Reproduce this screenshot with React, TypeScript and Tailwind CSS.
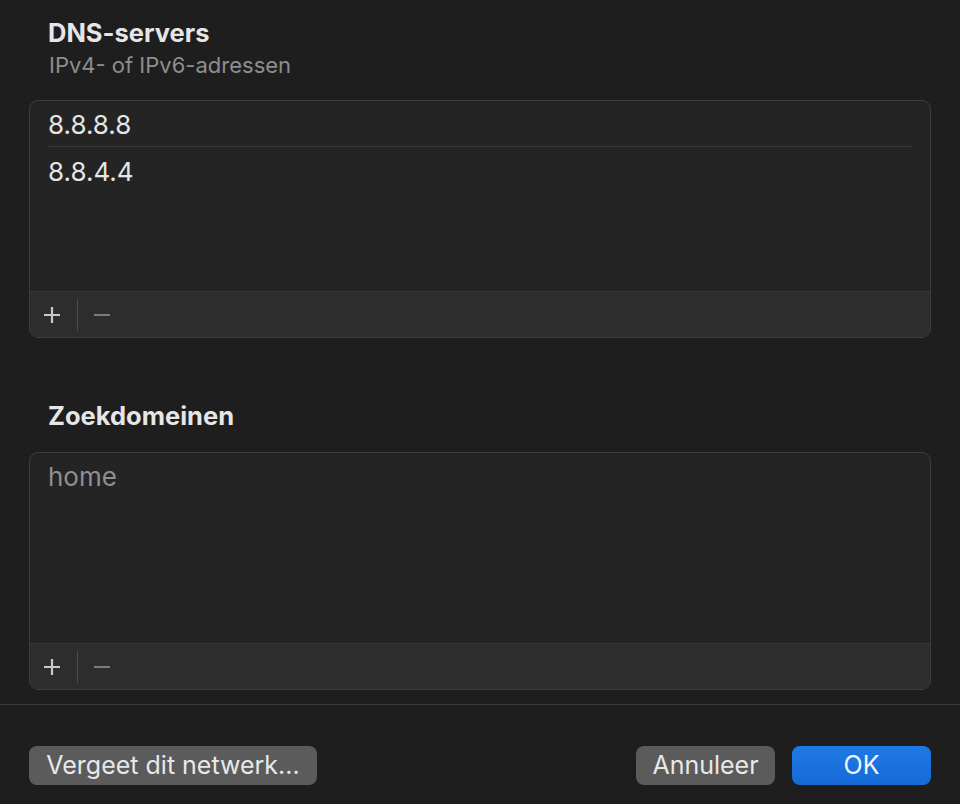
import React from "react";

const FONT = { fontFamily: "Inter, 'Noto Sans', sans-serif" };

// small +/- bar under each list
const ListFooter = () => (
  <div className="flex items-center h-[46px] bg-[#2d2d2d] border-t border-[#3a3a3a]">
    <button type="button" className="w-[47px] h-full flex items-center justify-center pr-[4px]">
      <svg width="18" height="18" viewBox="0 0 18 18">
        <path d="M9 1v16M1 9h16" stroke="#c9c9c9" strokeWidth="2.2" />
      </svg>
    </button>
    <div className="w-px h-[32px] bg-[#4a4a4a]" />
    <button type="button" className="w-[49px] h-full flex items-center justify-center pr-[1px]">
      <svg width="18" height="18" viewBox="0 0 18 18">
        <path d="M1 9h16" stroke="#7b7b7b" strokeWidth="2.2" />
      </svg>
    </button>
  </div>
);

const ListBox = ({ children }: { children: React.ReactNode }) => (
  <div className="mx-[29px] h-[238px] flex flex-col rounded-[9px] border border-[#3d3d3d] bg-[#242424] overflow-hidden">
    <div className="flex-1 flex flex-col">{children}</div>
    <ListFooter />
  </div>
);

const DNS_SERVERS = ["8.8.8.8", "8.8.4.4"];

export default function App() {
  return (
    <div className="w-[960px] h-[804px] bg-[#1e1e1e] flex flex-col text-[#e6e6e6]" style={FONT}>
      {/* DNS servers */}
      <div className="pt-[17px] px-[48px]">
        <div className="text-[25.5px] leading-[32px] font-bold">DNS-servers</div>
        <div className="text-[22px] leading-[28px] text-[#8e8e8e] mt-[2px] pl-px">IPv4- of IPv6-adressen</div>
      </div>
      <div className="mt-[21px]">
        <ListBox>
          <div className="px-[18px]">
            {DNS_SERVERS.map((ip, i) => (
              <div
                key={ip}
                className={`h-[46px] flex items-center text-[26px] ${
                  i === 0 ? "border-b border-[#383838] pt-[2px]" : "pt-[3px]"
                }`}
              >
                {ip}
              </div>
            ))}
          </div>
        </ListBox>
      </div>

      {/* Search domains */}
      <div className="mt-[62px] px-[48px]">
        <div className="text-[25.5px] leading-[32px] font-bold">Zoekdomeinen</div>
      </div>
      <div className="mt-[20px]">
        <ListBox>
          <div className="px-[18px] h-[46px] flex items-center text-[26px] text-[#8f8f8f]">home</div>
        </ListBox>
      </div>

      <div className="mt-[14px] h-px bg-[#383838]" />

      {/* Buttons */}
      <div className="flex-1 flex items-start pt-[41px] px-[29px]">
        <button
          type="button"
          className="h-[39px] w-[288px] rounded-[8px] bg-[#5b5b5b] text-[25px] text-[#e8e8e8] flex items-center justify-center"
        >
          Vergeet dit netwerk...
        </button>
        <div className="flex-1" />
        <button
          type="button"
          className="h-[39px] w-[139px] rounded-[8px] bg-[#5b5b5b] text-[25px] text-[#e8e8e8] flex items-center justify-center"
        >
          Annuleer
        </button>
        <button
          type="button"
          className="ml-[17px] h-[39px] w-[139px] rounded-[8px] bg-gradient-to-b from-[#1f7ae6] to-[#166ad6] text-[25px] text-[#f2f6fc] flex items-center justify-center"
        >
          OK
        </button>
      </div>
    </div>
  );
}
